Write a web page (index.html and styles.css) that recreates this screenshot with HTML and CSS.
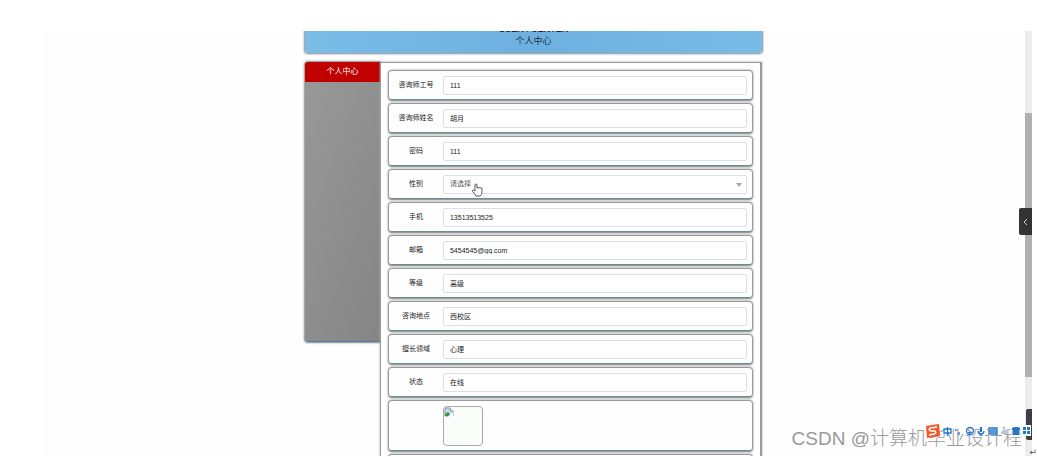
FILE: index.html
```html
<!DOCTYPE html>
<html lang="zh-CN">
<head>
<meta charset="utf-8">
<title>个人中心</title>
<link rel="stylesheet" href="styles.css">
</head>
<body>
<div class="screen">
  <div class="viewport">
    <div class="content">
      <header class="banner">
        <span class="banner-en">USER / CENTER</span>
        <h1 class="banner-title">个人中心</h1>
      </header>
      <div class="center">
        <nav class="sidebar"><a class="tab" href="#">个人中心</a></nav>
        <form class="form">
          <div class="row"><label for="no">咨询师工号</label><input id="no" value="111"></div>
          <div class="row"><label for="name">咨询师姓名</label><input id="name" value="胡月"></div>
          <div class="row"><label for="pw">密码</label><input id="pw" value="111"></div>
          <div class="row"><label for="sex">性别</label>
            <div class="select-wrap"><select id="sex"><option>请选择</option></select></div>
          </div>
          <div class="row"><label for="tel">手机</label><input id="tel" value="13513513525"></div>
          <div class="row"><label for="mail">邮箱</label><input id="mail" value="5454545@qq.com"></div>
          <div class="row"><label for="level">等级</label><input id="level" value="高级"></div>
          <div class="row"><label for="place">咨询地点</label><input id="place" value="西校区"></div>
          <div class="row"><label for="field">擅长领域</label><input id="field" value="心理"></div>
          <div class="row"><label for="state">状态</label><input id="state" value="在线"></div>
          <div class="row photo-row">
            <div class="photo">
              <svg width="10" height="10" viewBox="0 0 10 10"><path d="M1 1h5l3 3v5H1z" fill="#c9dcf3" stroke="#8c949c"/><path d="M6 1v3h3" fill="#fff" stroke="#8c949c"/><path d="M1 9V7l3-2 2 2-2 2z" fill="#36963f"/><path d="M4 10l5-5v5z" fill="#fff"/></svg>
            </div>
          </div>
          <div class="row"></div>
        </form>
      </div>
    </div>
  </div>
  <div class="scrollbar"><div class="thumb"></div></div>
</div>
<svg class="cursor" width="12" height="14" viewBox="0 0 12 14"><path d="M4 8V2q0-1 1-1t1 1v3q1-1 2 0 1-1 2 0 1-.5 1 1v3q0 3-2 4H5Q4 11 1.500 8.500 1 7 2.500 7z" fill="#fff" stroke="#444" stroke-width=".9"/></svg>
<button class="drawer" type="button" aria-label="展开"><svg width="5" height="8" viewBox="0 0 5 8"><path d="M4 1L1 4l3 3" fill="none" stroke="#ccc"/></svg></button>
<div class="dock"></div>
<div class="watermark">CSDN @计算机毕业设计程</div>
<div class="ime">
  <svg width="106" height="16" viewBox="0 0 106 16">
    <path d="M99 2h7v11h-7z" fill="#fff"/>
    <path d="M1 3l13-2 1 12-13 2z" fill="#ee5a28"/><path d="M12 4L5 5q-2 2 1 3l4 0q2 2-1 3l-5 1" fill="none" stroke="#fff" stroke-width="1.500"/>
    <g fill="none" stroke="#2277c8" stroke-width="1.300"><path d="M19 6h7v4h-7zM22.500 4v9M31 6v2M34 9v2l-1 1"/><circle cx="45" cy="8" r="3.500"/><path d="M43 9q2 2 4 0M53 8q0 3 3 3t3-3M56 11v2"/><path d="M64 5h8v6h-8zM65 7h6M65 9h6"/></g>
    <path d="M55 4h2v5h-2zM87 5l2-1h4l2 1v2h-1v5h-6V7h-1zM98 4h3v3h-3zM102 4h3v3h-3zM98 8h3v3h-3zM102 8h3v3h-3z" fill="#2277c8"/>
    <g fill="#a9c6e5"><circle cx="79" cy="5" r="1.500"/><path d="M76 11q0-4 3-4t3 4z"/></g>
  </svg>
</div>
<span class="return">↵</span>
</body>
</html>
```
FILE: styles.css
```css
* { box-sizing: border-box; }
body {
  margin: 0;
  height: 100vh;
  padding: 31px 5px 1px 42px;
  overflow: hidden;
  position: relative;
  background: #fff;
  color: #222;
  font: 7px/10px "Liberation Sans", "Noto Sans CJK SC", sans-serif;
}
.screen { display: flex; height: 100%; overflow: hidden; background: #fefefe; }
.viewport { flex: 1; overflow: hidden; }
.content { width: 46.5%; min-width: 440px; margin: 0 auto; }
.banner {
  display: flex;
  flex-direction: column;
  justify-content: flex-end;
  align-items: center;
  height: 22px;
  padding-bottom: 5px;
  overflow: hidden;
  border-radius: 0 0 3px 3px;
  background: linear-gradient(100deg, #7bbde9, #6db0df 50%, #7abce8);
  box-shadow: 0 0 2px 1px #888;
  color: #1d3547;
}
.banner-en { flex: none; font: bold 9px/12px "Liberation Sans", sans-serif; color: #222; }
.banner-title {
  flex: none;
  margin: 0;
  font-size: 9px;
  line-height: 13px;
  font-weight: 400;
}
.center { display: flex; align-items: flex-start; margin-top: 9px; }
.sidebar {
  width: 75px;
  height: 280px;
  overflow: hidden;
  border-radius: 3px 0 0 3px;
  border-bottom: 1px solid #4f79ab;
  background: linear-gradient(110deg, #999, #858585);
  box-shadow: 0 0 2px 1px #888;
}
.tab {
  display: block;
  background: #c00000;
  color: #fff;
  font-size: 8px;
  line-height: 20px;
  text-align: center;
  text-decoration: none;
}
.form {
  flex: 1;
  position: relative;
  padding: 8px;
  background: #fff;
  border: 1px solid #999;
  border-width: 1px 2px 1px 1px;
  box-shadow: 0 0 2px #aaa;
}
.row {
  display: flex;
  align-items: center;
  height: 29px;
  margin-bottom: 4px;
  padding: 0 5px 0 0;
  background: #fefefe;
  border-radius: 3px;
  border-bottom: 1px solid #5f9292;
  box-shadow: 0 0 2px 1px #777;
}
.row label { width: 54px; text-align: center; }
.row input, .select-wrap { flex: 1; min-width: 0; height: 19px; }
.row input, .row select {
  padding: 0 6px;
  border: 1px solid #dcdfe8;
  border-radius: 2px;
  background: #fff;
  color: #222;
  font: inherit;
}
.select-wrap { position: relative; }
.row select { width: 100%; height: 100%; appearance: none; color: #555; display: block; }
.select-wrap::after {
  content: "";
  position: absolute;
  right: 5px;
  top: 8px;
  border: 3px solid transparent;
  border-top: 4px solid #aaa;
  border-bottom: 0;
}
.photo-row { height: 50px; padding-left: 54px; }
.photo {
  width: 40px;
  height: 40px;
  border: 1px solid #aaa;
  border-radius: 4px;
  background: #fafcfa;
}
.scrollbar { width: 7px; padding-top: 82px; background: #ececec; }
.thumb { height: 77%; background: #b0b0b0; }
.cursor { position: absolute; left: 471px; top: 183px; }
.drawer {
  position: absolute;
  right: 5px;
  top: 208px;
  width: 13px;
  height: 27px;
  padding: 0;
  border: 0;
  border-radius: 2px 0 0 2px;
  background: #333;
}
.dock { position: absolute; right: 5px; bottom: 17px; width: 6px; height: 31px; background: #3c3f46; border-radius: 2px 0 0 2px; }
.ime { position: absolute; right: 6px; bottom: 18px; height: 16px; }
.ime svg { display: block; }
.watermark {
  position: absolute;
  right: 15px;
  bottom: 5px;
  font-size: 19px;
  line-height: 26px;
  font-weight: 300;
  color: #999;
  white-space: nowrap;
}
.return { position: absolute; right: 0; bottom: 0; font: 9px/9px "DejaVu Sans", sans-serif; color: #555; }
```
